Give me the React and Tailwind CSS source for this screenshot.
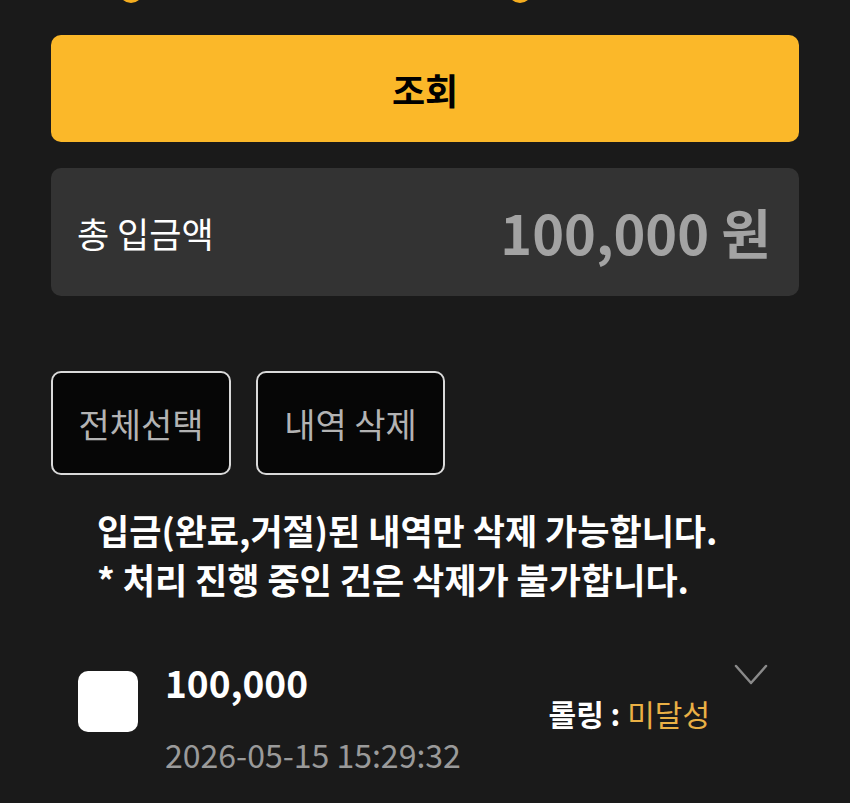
import React from 'react';

const App = () => {
  return (
    <div
      className="w-[850px] h-[803px] overflow-hidden bg-[#1a1a1a] font-['Noto_Sans_CJK_KR','Noto_Sans',sans-serif]"
    >
      {/* Previous row, cut off at the top */}
      <div className="h-[4px] overflow-hidden flex">
        <span className="mt-[-21px] ml-[119px] w-6 h-6 rounded-full bg-[#f5ad1f]" />
        <span className="mt-[-21px] ml-[365px] w-6 h-6 rounded-full bg-[#f5ad1f]" />
      </div>

      <div className="px-[51px]">
        {/* Search button */}
        <button className="mt-[31px] w-full h-[107px] rounded-[10px] bg-[#fbb829] text-black text-[36px] font-bold flex items-center justify-center">
          조회
        </button>

        {/* Total */}
        <div className="mt-[26px] h-[128px] rounded-[10px] bg-[#333333] flex items-center justify-between pl-[26px] pr-[28px]">
          <span className="text-white text-[35px] leading-none">총 입금액</span>
          <span className="text-[#a3a3a3] text-[54px] font-bold leading-none">100,000 원</span>
        </div>

        {/* Actions */}
        <div className="mt-[75px] flex gap-[25px]">
          <button className="w-[180px] h-[104px] rounded-[10px] bg-[#060606] border-2 border-[#d9d9d9] text-[#b3b3b3] text-[34px]">
            전체선택
          </button>
          <button className="w-[189px] h-[104px] rounded-[10px] bg-[#060606] border-2 border-[#d9d9d9] text-[#b3b3b3] text-[34px]">
            내역 삭제
          </button>
        </div>

        {/* Notice */}
        <div className="mt-[30px] pl-[46px] text-white text-[35px] font-bold leading-[49px] whitespace-nowrap">
          <p>입금(완료,거절)된 내역만 삭제 가능합니다.</p>
          <p>* 처리 진행 중인 건은 삭제가 불가합니다.</p>
        </div>

        {/* Item */}
        <div className="mt-[62px] flex items-start">
          <div className="mt-[6px] ml-[27px] w-[60px] h-[61px] rounded-[10px] bg-white shrink-0" />
          <div className="ml-[27px] mt-[-3px] flex flex-col">
            <span className="text-white text-[37px] font-bold leading-[40px]">100,000</span>
            <span className="mt-[35px] text-[#9a9a9a] text-[32px] leading-[34px] whitespace-nowrap">2026-05-15 15:29:32</span>
          </div>
          <div className="ml-auto flex flex-col items-end">
            <svg width="34" height="22" viewBox="0 0 34 22" className="mr-[31px] mt-[-1px]">
              <path d="M2 2 L17 19 L32 2" fill="none" stroke="#8a8a8a" strokeWidth="2.5" strokeLinecap="round" strokeLinejoin="round" />
            </svg>
            <div className="mt-[12px] mr-[89px] text-[30px] leading-none whitespace-nowrap">
              <span className="text-white font-bold">롤링 : </span>
              <span className="text-[#eab045]">미달성</span>
            </div>
          </div>
        </div>
      </div>
    </div>
  );
};

export default App;
